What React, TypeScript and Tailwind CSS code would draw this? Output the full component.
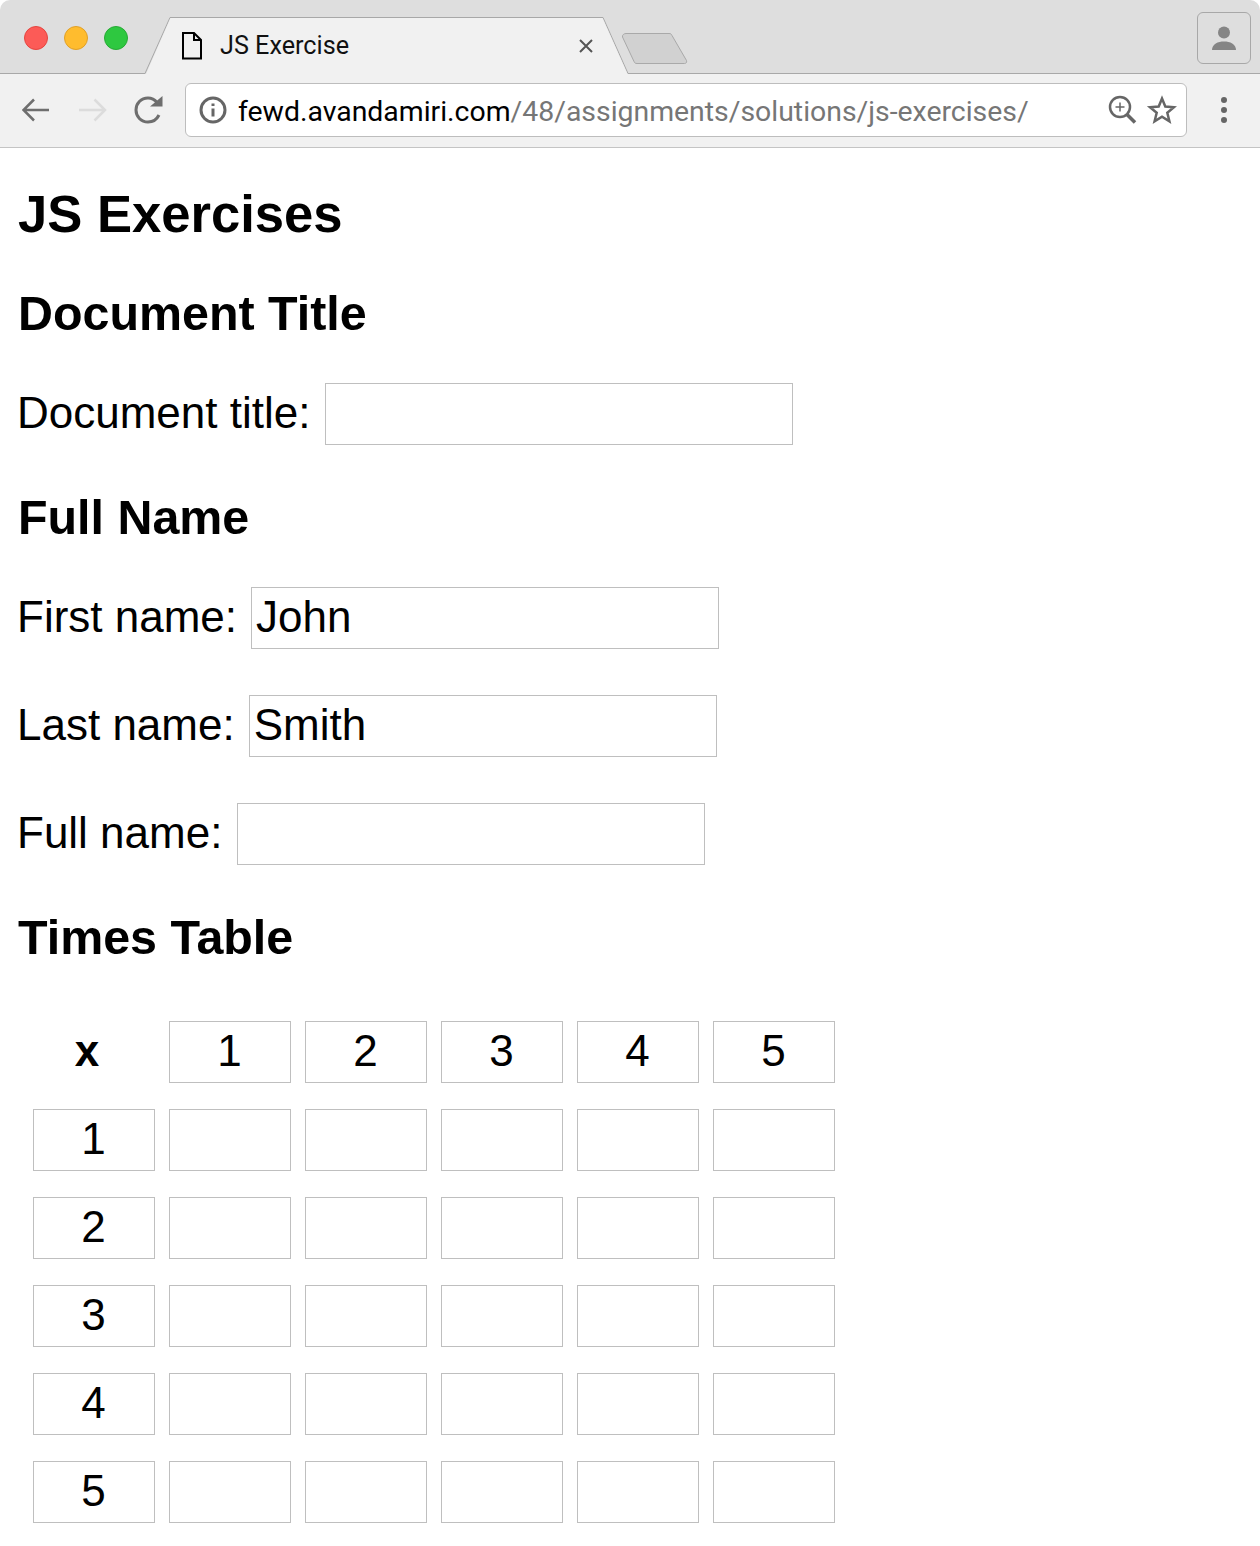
import React from 'react';

const Field = ({ label, value, className, labelClass }: { label: string; value?: string; className: string; labelClass: string }) => (
    <div className={`flex items-center ${className}`}>
        <label className={`pb-[2px] ${labelClass}`}>{label}</label>
        <input readOnly value={value ?? ''} className="w-[468px] h-[62px] border border-[#bfbfbf] pl-[4px] pr-[4px] pb-[2px] outline-none" />
    </div>
);

const NumberBox = ({ value }: { value?: number }) => (
    <div className="w-[122px] h-[62px] border border-[#bfbfbf] pb-[2px] pr-px flex items-center justify-center">{value}</div>
);

const TabStrip = () => (
    <div className="relative h-[74px] bg-[#dedede] rounded-t-[10px]">
        <svg className="absolute left-0 top-0" width="1260" height="74" viewBox="0 0 1260 74" fill="none">
            <path d="M0 73.500H145L170 17.500H603L628 73.500H1260" stroke="#a8a8a8" />
            <path d="M146 74L170.500 18H602.500L627.500 74Z" fill="#f1f1f1" />
            <path d="M626 33.500H669C670.500 33.500 671.500 34 672 35.500L686.500 60.500C687 62.500 686 63.500 684.500 63.500H637C635.500 63.500 634.500 63 634 61.500L622.500 37C622 35 624 33.500 626 33.500Z" fill="#d1d1d1" stroke="#a9a9a9" />
            <circle cx="36" cy="38" r="11.500" fill="#fc5b57" stroke="#e5453f" />
            <circle cx="76" cy="38" r="11.500" fill="#ffbc2e" stroke="#e0a028" />
            <circle cx="116" cy="38" r="11.500" fill="#2ec840" stroke="#27aa35" />
            <path d="M183 33H194L201 40V58.500H183Z M194 33V40H201" stroke="#000" strokeWidth="2" />
            <path d="M580 40L592 52M592 40L580 52" stroke="#555" strokeWidth="2" />
        </svg>
        <span className="absolute left-[220px] top-[31px] text-[25.2px] leading-[30px] text-[#111] font-['Roboto',sans-serif]">JS Exercise</span>
        <div className="absolute left-[1197px] top-[12px] w-[54px] h-[52px] border border-[#a8a8a8] rounded-[6px] flex items-center justify-center">
            <svg width="26" height="26" viewBox="0 0 26 26" fill="#858585">
                <circle cx="13" cy="7.500" r="6" />
                <path d="M1 25C1 19 7 16.500 13 16.500C19 16.500 25 19 25 25Z" />
            </svg>
        </div>
    </div>
);

const Toolbar = () => (
    <div className="h-[74px] bg-[#f1f1f1] border-b border-b-[#c4c4c4] pt-[9px] flex items-start">
        <svg className="ml-[22px] mt-[12px] shrink-0" width="142" height="30" viewBox="0 0 142 30" fill="none" strokeWidth="2.500">
            <path d="M27 15H1.500M12 4.500L1.500 15L12 25.500" stroke="#6e6e6e" />
            <path d="M57 15H83M72.500 4.500L83 15L72.500 25.500" stroke="#dcdcdc" />
            <path d="M137 20C135 24 131 27 126 27C119 27 114 21.500 114 15C114 8.500 119 3 126 3C130 3 133 5 135 7.500" stroke="#6e6e6e" strokeWidth="3" />
            <path d="M128 11.500H140.500V1Z" fill="#6e6e6e" />
        </svg>
        <div className="ml-[21px] w-[1002px] h-[54px] bg-white border border-[#bdbdbd] rounded-[6px] flex items-center shrink-0">
            <svg className="ml-[13px] shrink-0" width="28" height="28" viewBox="0 0 28 28" fill="none">
                <circle cx="14" cy="14" r="12" stroke="#666" strokeWidth="3" />
                <path d="M14 12.500V20.500M14 7.500V10" stroke="#666" strokeWidth="3" />
            </svg>
            <span className="ml-[11px] mt-[4px] text-[28.4px] leading-[36px] text-[#767676] whitespace-nowrap font-['Roboto',sans-serif]"><span className="text-black">fewd.avandamiri.com</span>/48/assignments/solutions/js-exercises/</span>
            <svg className="ml-auto mr-[9px] shrink-0" width="70" height="30" viewBox="0 0 70 30" fill="none" stroke="#666">
                <circle cx="13" cy="12" r="10" strokeWidth="2.500" />
                <path d="M20 19.500L28 27.500" strokeWidth="3.500" />
                <path d="M13 7.500V16.500M8.500 12H17.500" strokeWidth="1.500" />
                <path d="M55 3.500L58.300 11.500L67 12.200L60.300 17.800L62.400 26.300L55 21.700L47.600 26.300L49.700 17.800L43 12.200L51.700 11.500Z" strokeWidth="2.500" />
            </svg>
        </div>
        <div className="ml-[34px] mt-[14px] flex flex-col gap-[4px]">
            <span className="w-[6px] h-[6px] rounded-full bg-[#666]" />
            <span className="w-[6px] h-[6px] rounded-full bg-[#666]" />
            <span className="w-[6px] h-[6px] rounded-full bg-[#666]" />
        </div>
    </div>
);

const App = () => {
    const numbers = [1, 2, 3, 4, 5];

    return (
        <div className="w-[1260px] h-[1546px] bg-white text-black overflow-hidden font-['Liberation_Sans',Arial,sans-serif]">
            <TabStrip />
            <Toolbar />
            <div className="pl-[17px] text-[44px] leading-[50px]">
                <h1 className="pt-[37px] ml-px text-[52.6px] leading-[58px] font-bold">JS Exercises</h1>
                <h2 className="mt-[43px] ml-px text-[48.4px] leading-[54px] font-bold">Document Title</h2>
                <Field className="mt-[43px]" labelClass="mr-[15px]" label="Document title:" />
                <h2 className="mt-[45px] ml-px text-[48.4px] leading-[54px] font-bold">Full Name</h2>
                <Field className="mt-[43px]" labelClass="mr-[14px]" label="First name:" value="John" />
                <Field className="mt-[46px]" labelClass="mr-[14px]" label="Last name:" value="Smith" />
                <Field className="mt-[46px]" labelClass="mr-[15px]" label="Full name:" />
                <h2 className="mt-[45px] ml-px text-[48.4px] leading-[54px] font-bold">Times Table</h2>
                <div className="mt-[57px] ml-[16px] grid grid-cols-[repeat(6,122px)] gap-x-[14px] gap-y-[26px]">
                    <div className="h-[62px] pr-[14px] pb-[2px] flex items-center justify-center font-bold">x</div>
                    {numbers.map((n) => <NumberBox key={n} value={n} />)}
                    {numbers.map((row) => (
                        <React.Fragment key={row}>
                            <NumberBox value={row} />
                            {numbers.map((col) => <NumberBox key={col} />)}
                        </React.Fragment>
                    ))}
                </div>
            </div>
        </div>
    );
};

export default App;
